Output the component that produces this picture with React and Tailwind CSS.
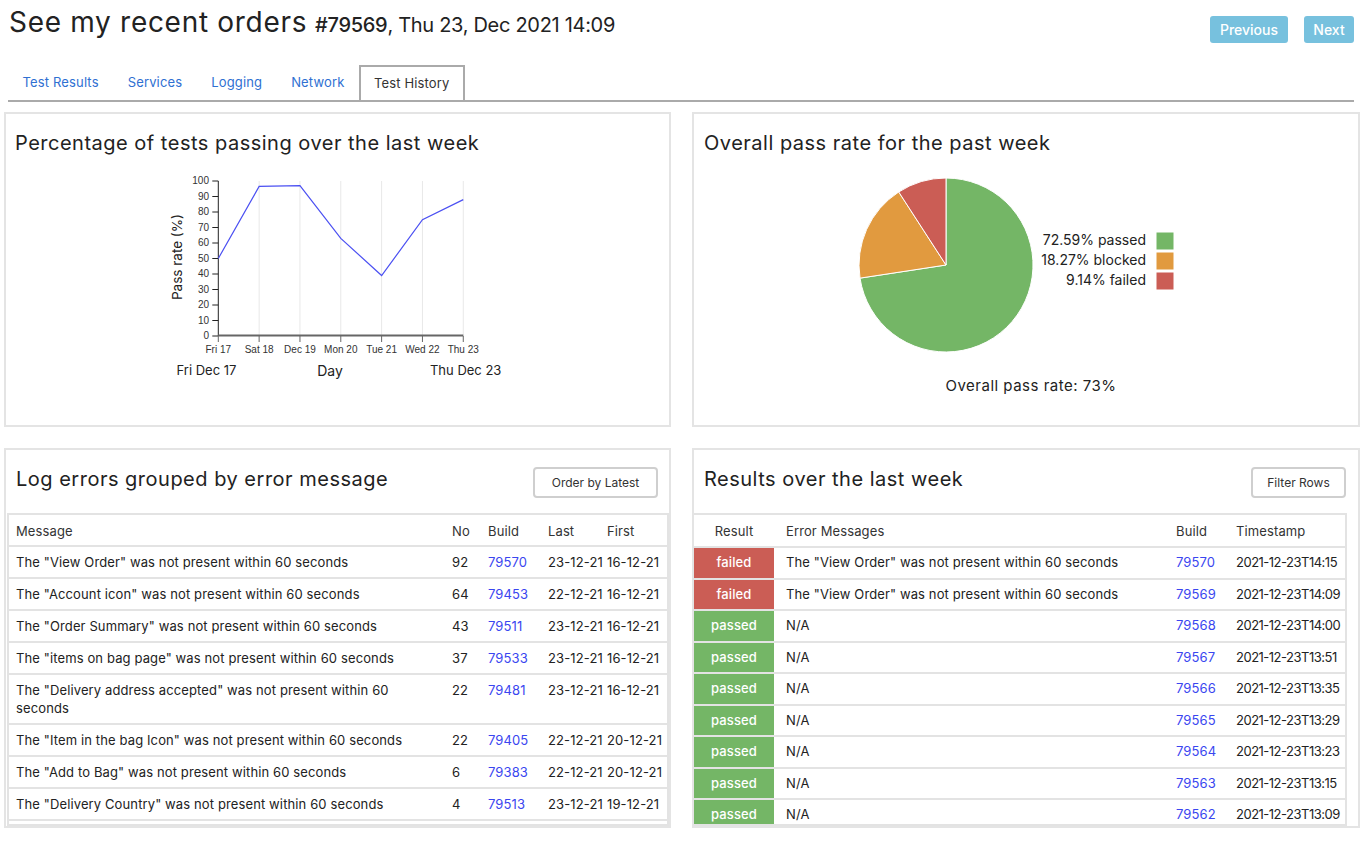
import React from 'react';

const logRows = [
  { msg: 'The "View Order" was not present within 60 seconds', no: 92, build: '79570', last: '23-12-21', first: '16-12-21' },
  { msg: 'The "Account icon" was not present within 60 seconds', no: 64, build: '79453', last: '22-12-21', first: '16-12-21' },
  { msg: 'The "Order Summary" was not present within 60 seconds', no: 43, build: '79511', last: '23-12-21', first: '16-12-21' },
  { msg: 'The "items on bag page" was not present within 60 seconds', no: 37, build: '79533', last: '23-12-21', first: '16-12-21' },
  { msg: 'The "Delivery address accepted" was not present within 60 seconds', no: 22, build: '79481', last: '23-12-21', first: '16-12-21' },
  { msg: 'The "Item in the bag Icon" was not present within 60 seconds', no: 22, build: '79405', last: '22-12-21', first: '20-12-21' },
  { msg: 'The "Add to Bag" was not present within 60 seconds', no: 6, build: '79383', last: '22-12-21', first: '20-12-21' },
  { msg: 'The "Delivery Country" was not present within 60 seconds', no: 4, build: '79513', last: '23-12-21', first: '19-12-21' },
];

const resultRows = [
  { result: 'failed', msg: 'The "View Order" was not present within 60 seconds', build: '79570', ts: '2021-12-23T14:15' },
  { result: 'failed', msg: 'The "View Order" was not present within 60 seconds', build: '79569', ts: '2021-12-23T14:09' },
  { result: 'passed', msg: 'N/A', build: '79568', ts: '2021-12-23T14:00' },
  { result: 'passed', msg: 'N/A', build: '79567', ts: '2021-12-23T13:51' },
  { result: 'passed', msg: 'N/A', build: '79566', ts: '2021-12-23T13:35' },
  { result: 'passed', msg: 'N/A', build: '79565', ts: '2021-12-23T13:29' },
  { result: 'passed', msg: 'N/A', build: '79564', ts: '2021-12-23T13:23' },
  { result: 'passed', msg: 'N/A', build: '79563', ts: '2021-12-23T13:15' },
  { result: 'passed', msg: 'N/A', build: '79562', ts: '2021-12-23T13:09' },
];

const tabs = ['Test Results', 'Services', 'Logging', 'Network', 'Test History'];

// chart geometry, in page coordinates
const xs = [0, 1, 2, 3, 4, 5, 6].map((i) => 218.3 + i * 40.83);
const vals = [50, 96.5, 97, 63, 39, 75, 88];
const dayLabels = ['Fri 17', 'Sat 18', 'Dec 19', 'Mon 20', 'Tue 21', 'Wed 22', 'Thu 23'];
const yOf = (v) => 336 - v * 1.55;
const tickFont = "'Liberation Sans', Arial, sans-serif";
const uiFont = "Inter, sans-serif";

const LineChart = () => (
  <svg width="663" height="268" className="block">
    <g transform="translate(-6,-157)">
      {xs.slice(1).map((x) => (
        <line key={x} x1={x} x2={x} y1={181} y2={336} stroke="#e8e8e8" strokeWidth="1" />
      ))}
      {[0, 10, 20, 30, 40, 50, 60, 70, 80, 90, 100].map((v) => (
        <g key={v}>
          <line x1={212.3} x2={218.3} y1={yOf(v)} y2={yOf(v)} stroke="#222" strokeWidth="1" />
          <text x={209} y={yOf(v)} dy="0.34em" textAnchor="end" fontSize="10" fontFamily={tickFont} fill="#333">
            {v}
          </text>
        </g>
      ))}
      <line x1={218.3} x2={218.3} y1={181} y2={336} stroke="#222" strokeWidth="1" />
      <line x1={218.3} x2={463.3} y1={335.5} y2={335.5} stroke="#666" strokeWidth="2" />
      {xs.map((x, i) => (
        <g key={x}>
          <line x1={x} x2={x} y1={336} y2={342} stroke="#666" strokeWidth="1" />
          <text x={x} y={350} dy="0.34em" textAnchor="middle" fontSize="10" fontFamily={tickFont} fill="#333">
            {dayLabels[i]}
          </text>
        </g>
      ))}
      <polyline
        points={xs.map((x, i) => `${x},${yOf(vals[i])}`).join(' ')}
        fill="none"
        stroke="#4b50f2"
        strokeWidth="1.2"
      />
      <text
        x={177}
        y={257}
        dy="0.34em"
        textAnchor="middle"
        transform="rotate(-90 177 257)"
        fontSize="13.5"
        fontFamily={uiFont}
        fill="#222"
      >
        Pass rate (%)
      </text>
      <text x={206.5} y={371} dy="0.34em" textAnchor="middle" fontSize="13" fontFamily={uiFont} fill="#222">
        Fri Dec 17
      </text>
      <text x={330} y={371} dy="0.34em" textAnchor="middle" fontSize="14" fontFamily={uiFont} fill="#222">
        Day
      </text>
      <text x={465.7} y={371} dy="0.34em" textAnchor="middle" fontSize="13" fontFamily={uiFont} fill="#222">
        Thu Dec 23
      </text>
    </g>
  </svg>
);

const legend = [
  { label: '72.59% passed', color: '#74b666' },
  { label: '18.27% blocked', color: '#e19a3f' },
  { label: '9.14% failed', color: '#cb5d55' },
];

const PieChart = () => (
  <svg width="664" height="215" className="block">
    <g transform="translate(-694,-157)">
      <path d="M946,265 L946,178 A87,87 0 1 1 860,278.13 Z" fill="#74b666" stroke="#fff" strokeWidth="1" />
      <path d="M946,265 L860,278.13 A87,87 0 0 1 898.74,191.95 Z" fill="#e19a3f" stroke="#fff" strokeWidth="1" />
      <path d="M946,265 L898.74,191.95 A87,87 0 0 1 946,178 Z" fill="#cb5d55" stroke="#fff" strokeWidth="1" />
      {legend.map((l, i) => (
        <g key={l.label}>
          <text x={1146} y={240.5 + i * 20} dy="0.34em" textAnchor="end" fontSize="14" fontFamily={uiFont} fill="#222">
            {l.label}
          </text>
          <rect x={1156} y={232 + i * 20} width="18" height="18" fill={l.color} stroke="#fff" strokeWidth="1" />
        </g>
      ))}
    </g>
  </svg>
);

const Link = ({ children }) => <span className="text-[#3a46f0]">{children}</span>;

const App = () => {
  return (
    <div className="w-[1368px] min-h-[844px] bg-white pl-[4px] pr-[8px] text-[#222] font-['Inter',sans-serif]">
      {/* Header */}
      <div className="flex justify-between items-start pl-[5px] pr-[6px] pt-[5px]">
        <h1 className="text-[28px] leading-[34px] text-[#222]">
          <span className="tracking-[0.7px]">See my recent orders</span>{' '}
          <span className="text-[20px] font-medium tracking-[-0.3px]">#79569</span>
          <span className="text-[20px] tracking-[-0.3px]">, Thu 23, Dec 2021 14:09</span>
        </h1>
        <div className="flex gap-4 mt-[11px]">
          <button className="w-[78px] h-[27px] rounded-[3px] bg-[#77c1de] text-white text-[14px] font-medium">
            Previous
          </button>
          <button className="w-[50px] h-[27px] rounded-[3px] bg-[#77c1de] text-white text-[14px] font-medium">
            Next
          </button>
        </div>
      </div>

      {/* Tabs */}
      <div className="flex mt-[22px] ml-[4px] mr-[6px] border-b-2 border-[#aaaaaa] tracking-[0.15px]">
        {tabs.map((t) =>
          t === 'Test History' ? (
            <div key={t} className="h-[35px] px-[13px] flex items-center border-2 border-b-0 border-[#aaaaaa] text-[13px] text-[#333]">
              {t}
            </div>
          ) : (
            <div key={t} className="h-[35px] px-[14.5px] flex items-center text-[13px] text-[#2f70d2]">
              {t}
            </div>
          )
        )}
      </div>

      {/* Panels */}
      <div className="grid grid-cols-[667px_668px] gap-[21px] mt-[10px]">
        <div className="h-[315px] border-2 border-[#e4e4e4]">
          <h2 className="pl-[9px] pt-[15px] text-[20px] leading-[28px] tracking-[0.5px] text-[#222]">
            Percentage of tests passing over the last week
          </h2>
          <LineChart />
        </div>

        <div className="h-[315px] border-2 border-[#e4e4e4]">
          <h2 className="pl-[10px] pt-[15px] text-[20px] leading-[28px] tracking-[0.5px] text-[#222]">
            Overall pass rate for the past week
          </h2>
          <PieChart />
          <div className="mt-[4px] pl-[10px] text-center text-[15px] leading-[20px] tracking-[0.5px] text-[#222]">
            Overall pass rate: 73%
          </div>
        </div>

        <div className="h-[380px] border-2 border-[#e4e4e4] flex flex-col">
          <div className="flex justify-between items-start pl-[10px] pr-[11px] pt-[15px]">
            <h2 className="text-[20px] leading-[28px] tracking-[0.5px] text-[#222]">Log errors grouped by error message</h2>
            <button className="mt-[2px] w-[125px] h-[31px] border-2 border-[#cfcfcf] rounded-[4px] text-[12px] text-[#333]">
              Order by Latest
            </button>
          </div>
          <div className="mt-[15px] ml-[1px] h-[313px] border-2 border-[#e3e3e3] overflow-hidden">
            <table className="w-full table-fixed border-collapse text-[13px] tracking-[0.12px] text-[#222]">
              <colgroup>
                <col className="w-[436px]" />
                <col className="w-[36px]" />
                <col className="w-[60px]" />
                <col className="w-[59px]" />
                <col />
              </colgroup>
              <thead>
                <tr className="border-b-2 border-[#e3e3e3]">
                  {['Message', 'No', 'Build', 'Last', 'First'].map((h) => (
                    <th key={h} className="px-[7px] pt-[7px] pb-[5px] leading-[18px] font-normal text-left text-[#333]">
                      {h}
                    </th>
                  ))}
                </tr>
              </thead>
              <tbody>
                {logRows.map((r, i) => (
                  <tr key={i} className="border-b-2 border-[#e3e3e3] align-top">
                    <td className="px-[7px] py-[6px] leading-[18px]">{r.msg}</td>
                    <td className="px-[7px] py-[6px] leading-[18px]">{r.no}</td>
                    <td className="px-[7px] py-[6px] leading-[18px]"><Link>{r.build}</Link></td>
                    <td className="px-[7px] py-[6px] leading-[18px] whitespace-nowrap">{r.last}</td>
                    <td className="px-[7px] py-[6px] leading-[18px] whitespace-nowrap">{r.first}</td>
                  </tr>
                ))}
              </tbody>
            </table>
          </div>
        </div>

        <div className="h-[380px] border-2 border-[#e4e4e4] flex flex-col">
          <div className="flex justify-between items-start pl-[10px] pr-[12px] pt-[15px]">
            <h2 className="text-[20px] leading-[28px] tracking-[0.5px] text-[#222]">Results over the last week</h2>
            <button className="mt-[2px] w-[95px] h-[31px] border-2 border-[#cfcfcf] rounded-[4px] text-[12px] text-[#333]">
              Filter Rows
            </button>
          </div>
          <div className="mt-[15px] mr-[11px] h-[313px] border-2 border-[#e3e3e3] border-l-0 overflow-hidden">
            <table className="w-full table-fixed border-collapse text-[13px] tracking-[0.12px] text-[#222]">
              <colgroup>
                <col className="w-[80px]" />
                <col className="w-[390px]" />
                <col className="w-[60px]" />
                <col />
              </colgroup>
              <thead>
                <tr className="border-b-2 border-[#e3e3e3]">
                  <th className="pt-[7px] pb-[6px] leading-[18px] font-normal text-center text-[#333]">Result</th>
                  <th className="px-[12px] pt-[7px] pb-[6px] leading-[18px] font-normal text-left text-[#333]">Error Messages</th>
                  <th className="px-[12px] pt-[7px] pb-[6px] leading-[18px] font-normal text-left text-[#333]">Build</th>
                  <th className="px-[12px] pt-[7px] pb-[6px] leading-[18px] font-normal text-left text-[#333]">Timestamp</th>
                </tr>
              </thead>
              <tbody>
                {resultRows.map((r, i) => (
                  <tr key={i} className="border-b-2 border-[#e3e3e3]">
                    <td
                      className={
                        r.result === 'failed'
                          ? 'py-[6px] leading-[17.5px] text-center text-white font-medium bg-[#cb5d55]'
                          : 'py-[6px] leading-[17.5px] text-center text-white font-medium bg-[#74b666]'
                      }
                    >
                      {r.result}
                    </td>
                    <td className="px-[12px] py-[6px] leading-[17.5px]">{r.msg}</td>
                    <td className="px-[12px] py-[6px] leading-[17.5px]"><Link>{r.build}</Link></td>
                    <td className="px-[12px] py-[6px] leading-[17.5px] whitespace-nowrap tracking-[-0.5px]">{r.ts}</td>
                  </tr>
                ))}
              </tbody>
            </table>
          </div>
        </div>
      </div>
    </div>
  );
};

export default App;
